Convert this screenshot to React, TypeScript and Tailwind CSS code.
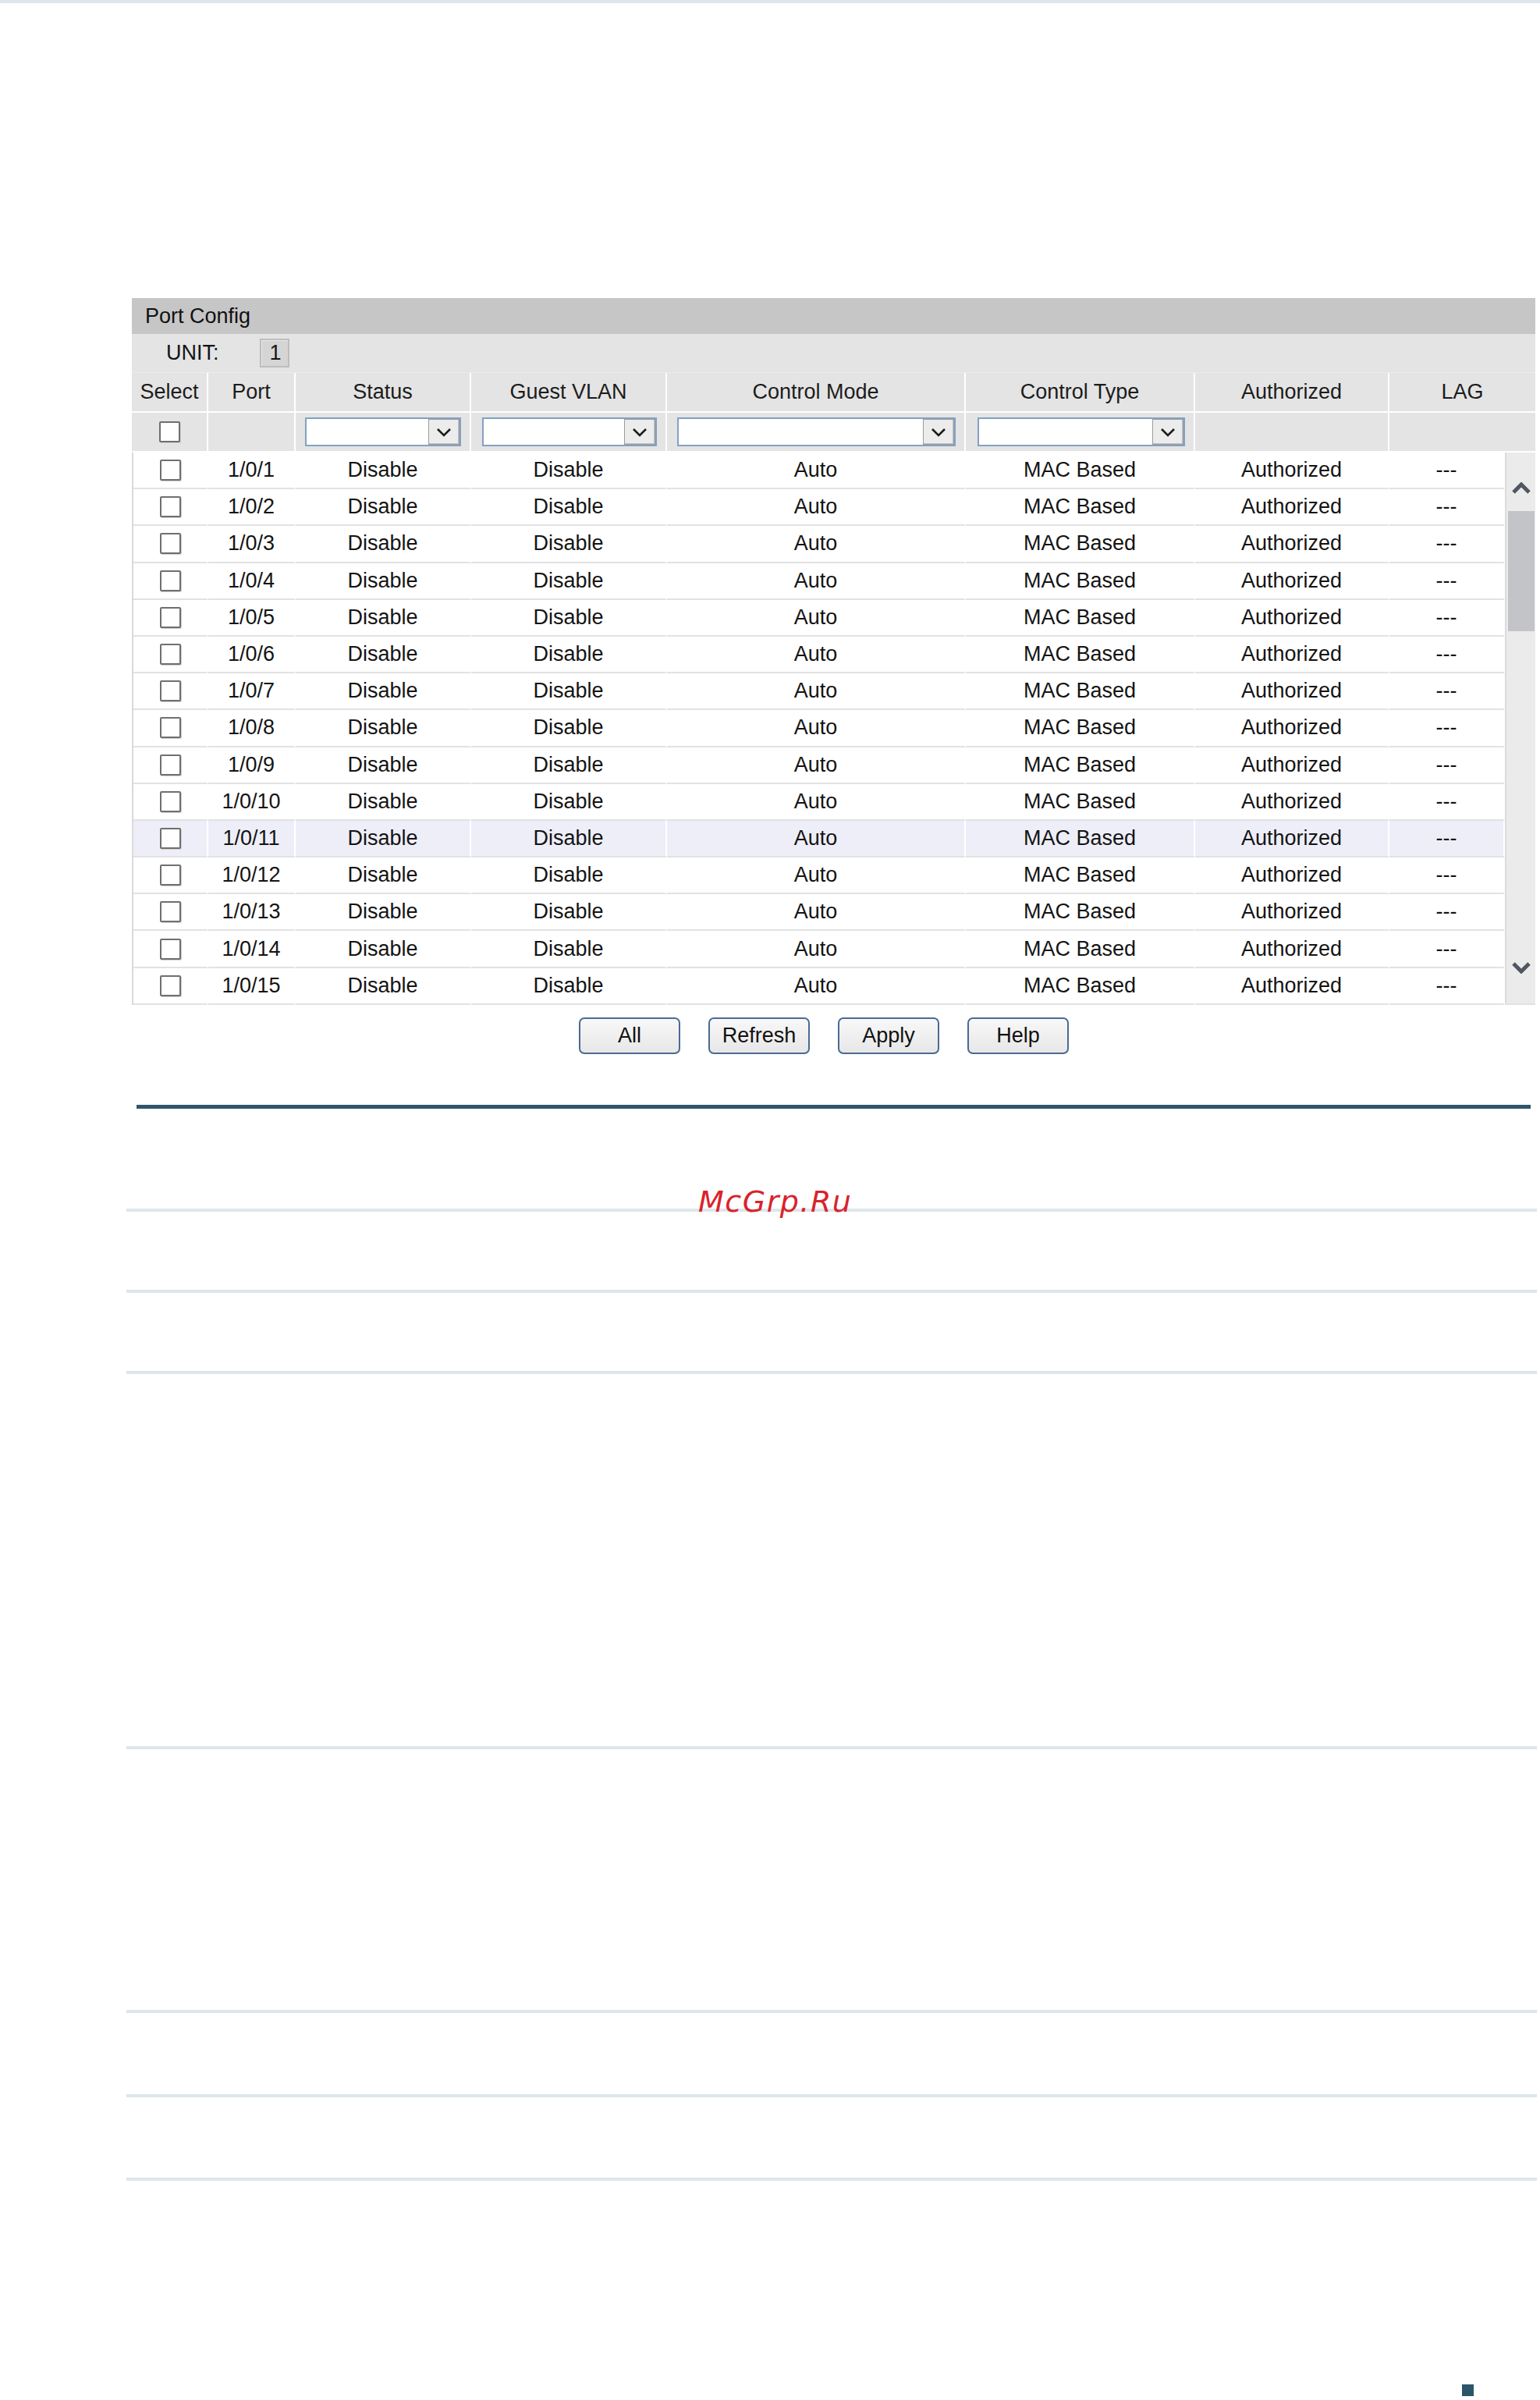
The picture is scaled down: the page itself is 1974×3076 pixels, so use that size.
import React from "react";

const headCols = [
  { label: "Select", w: "w-[98px]" },
  { label: "Port", w: "w-[112px]" },
  { label: "Status", w: "w-[225px]" },
  { label: "Guest VLAN", w: "w-[251px]" },
  { label: "Control Mode", w: "w-[383px]" },
  { label: "Control Type", w: "w-[294px]" },
  { label: "Authorized", w: "w-[249px]" },
  { label: "LAG", w: "w-[187px]" },
];

const ports = Array.from({ length: 15 }, (_, i) => `1/0/${i + 1}`);

function Checkbox() {
  return (
    <div className="w-[27px] h-[27px] bg-white border-2 border-[#6f6f6f] rounded-[2px] shadow-[1px_1px_0_#d0d0d0]" />
  );
}

function Chevron({ up = false, className = "" }: { up?: boolean; className?: string }) {
  return (
    <svg width="26" height="16" viewBox="0 0 26 16" className={className}>
      <polyline
        points={up ? "3,13 13,3 23,13" : "3,3 13,13 23,3"}
        fill="none"
        stroke="#505760"
        strokeWidth="5"
        strokeLinejoin="miter"
      />
    </svg>
  );
}

function DropSelect() {
  return (
    <div className="h-[37px] w-full bg-white border-2 border-[#82a2c3] flex justify-end">
      <div className="w-[40px] h-full bg-[#ececec] border border-[#9c9c9c] shadow-[inset_-1px_-1px_0_#c4c4c4] flex items-center justify-center">
        <svg width="20" height="12" viewBox="0 0 20 12">
          <polyline points="2,2 10,10 18,2" fill="none" stroke="#1c1c1c" strokeWidth="2.6" />
        </svg>
      </div>
    </div>
  );
}

function DataRow({ port, hot }: { port: string; hot: boolean }) {
  const cell =
    "h-[47.2px] border-b-2 border-b-[#e2e2e2] border-r-2 border-r-white flex items-center justify-center " +
    (hot ? "bg-[#eeeef8]" : "bg-white");
  return (
    <div className="flex">
      <div className={`${cell} w-[96px]`}>
        <Checkbox />
      </div>
      <div className={`${cell} w-[112px]`}>{port}</div>
      <div className={`${cell} w-[225px]`}>Disable</div>
      <div className={`${cell} w-[251px]`}>Disable</div>
      <div className={`${cell} w-[383px]`}>Auto</div>
      <div className={`${cell} w-[294px]`}>MAC Based</div>
      <div className={`${cell} w-[249px]`}>Authorized</div>
      <div className={`${cell} w-[148px] border-r-0`}>---</div>
    </div>
  );
}

function Btn({ label }: { label: string }) {
  return (
    <button className="w-[130px] h-[47px] rounded-[7px] border-2 border-[#4a6a92] bg-gradient-to-b from-[#f8f8f8] to-[#e7e7e7] text-[27px] text-[#111] leading-none flex items-center justify-center">
      {label}
    </button>
  );
}

export default function App() {
  return (
    <div
      className="relative w-[1974px] min-h-[3076px] bg-white text-[#141414]"
      style={{ fontFamily: '"Liberation Sans", Arial, sans-serif' }}
    >
      <div className="h-[4px] bg-[#dde7ec]" />

      {/* Port Config panel */}
      <div className="mt-[378px] ml-[169px] w-[1799px] text-[27px] leading-none">
        <div className="h-[46px] bg-[#c6c6c6] flex items-center pl-[17px] text-[#111]">Port Config</div>
        <div className="h-[50px] bg-[#e4e4e4] border-b border-[#ececec] flex items-center pl-[44px]">
          <span>UNIT:</span>
          <div className="ml-[52px] w-[38px] h-[37px] bg-[#d5d5d5] border-2 border-[#bdbdbd] shadow-[inset_1px_1px_0_#e8e8e8] flex items-center justify-end pr-[8px]">
            1
          </div>
        </div>

        {/* column headings */}
        <div className="flex h-[51px] border-b-2 border-white">
          {headCols.map((c, i) => (
            <div
              key={c.label}
              className={`${c.w} h-full bg-[#e4e4e4] flex items-center justify-center text-[#1c1c1c] ${
                i < headCols.length - 1 ? "border-r-2 border-white" : ""
              }`}
            >
              {c.label}
            </div>
          ))}
        </div>

        {/* filter row */}
        <div className="flex h-[51px] border-b-2 border-white">
          <div className="w-[98px] h-full bg-[#e4e4e4] border-r-2 border-white flex items-center justify-center">
            <Checkbox />
          </div>
          <div className="w-[112px] h-full bg-[#e4e4e4] border-r-2 border-white" />
          <div className="w-[225px] h-full bg-[#e4e4e4] border-r-2 border-white flex items-center pl-[12px] pr-[11px]">
            <DropSelect />
          </div>
          <div className="w-[251px] h-full bg-[#e4e4e4] border-r-2 border-white flex items-center pl-[14px] pr-[11px]">
            <DropSelect />
          </div>
          <div className="w-[383px] h-full bg-[#e4e4e4] border-r-2 border-white flex items-center pl-[13px] pr-[11px]">
            <DropSelect />
          </div>
          <div className="w-[294px] h-full bg-[#e4e4e4] border-r-2 border-white flex items-center pl-[15px] pr-[11px]">
            <DropSelect />
          </div>
          <div className="w-[249px] h-full bg-[#e4e4e4] border-r-2 border-white" />
          <div className="w-[187px] h-full bg-[#e4e4e4]" />
        </div>

        {/* rows with scrollbar */}
        <div className="flex">
          <div className="w-[1760px] border-l-2 border-[#dadada]">
            {ports.map((p, i) => (
              <DataRow key={p} port={p} hot={i === 10} />
            ))}
          </div>
          <div className="w-[39px] bg-[#ebebeb] border-l-2 border-[#dcdcdc] border-b-2 border-b-[#e2e2e2] flex flex-col items-center">
            <Chevron up className="mt-[38px]" />
            <div className="mt-[21px] w-[34px] h-[154px] bg-[#c3c4c7]" />
            <div className="flex-1" />
            <Chevron className="mb-[38px]" />
          </div>
        </div>
      </div>

      {/* action buttons */}
      <div className="mt-[16px] ml-[169px] w-[1799px] pr-[25px] flex justify-center gap-[36px]">
        <Btn label="All" />
        <Btn label="Refresh" />
        <Btn label="Apply" />
        <Btn label="Help" />
      </div>

      <div className="mt-[65px] ml-[175px] w-[1787px] h-[5px] bg-[#2f5569]" />

      <div className="mt-[128px] ml-[162px] w-[1808px] h-[4px] bg-[#dde6ea]" />
      <div className="mt-[100px] ml-[162px] w-[1808px] h-[4px] bg-[#dde6ea]" />
      <div className="mt-[100px] ml-[162px] w-[1808px] h-[4px] bg-[#dde6ea]" />
      <div className="mt-[477px] ml-[162px] w-[1808px] h-[4px] bg-[#dde6ea]" />
      <div className="mt-[334px] ml-[162px] w-[1808px] h-[4px] bg-[#dde6ea]" />
      <div className="mt-[104px] ml-[162px] w-[1808px] h-[4px] bg-[#dde6ea]" />
      <div className="mt-[103px] ml-[162px] w-[1808px] h-[4px] bg-[#dde6ea]" />

      <div className="mt-[261px] ml-[1874px] w-[15px] h-[15px] bg-[#2c5568]" />

      {/* site mark laid over the first rule */}
      <div
        className="absolute left-[895px] top-[1521px] text-[38px] leading-none italic tracking-[1.5px] text-[#d9232b]"
        style={{ fontFamily: '"DejaVu Sans", sans-serif' }}
      >
        McGrp.Ru
      </div>
    </div>
  );
}
